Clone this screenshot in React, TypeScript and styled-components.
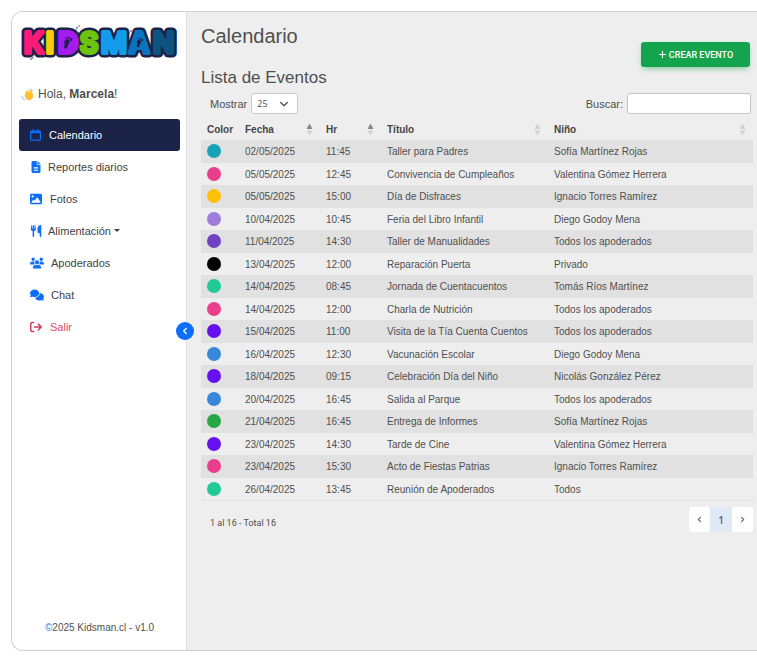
import React, { useState } from "react";
import styled, { createGlobalStyle, css } from "styled-components";
import {
  FaFileLines,
  FaImage,
  FaUtensils,
  FaUsers,
  FaComments,
  FaArrowRightFromBracket,
  FaPlus,
} from "react-icons/fa6";

const GlobalStyle = createGlobalStyle`
  *, *::before, *::after { box-sizing: border-box; }
  body {
    margin: 0;
    background: #fff;
    color: #4f4f4f;
    font-family: "Liberation Sans", Arial, sans-serif;
    font-size: 11px;
    overflow-x: hidden;
  }
  button, input, select { font: inherit; color: inherit; }
`;

const Frame = styled.div`
  display: flex;
  min-height: calc(100vh - 21px);
  margin: 11px 0 10px 11px;
  border: 1px solid #cfcfcf;
  border-right: 0;
  border-radius: 12px 0 0 12px;
  background: #eeeeee;
`;

const Sidebar = styled.aside`
  position: relative;
  display: flex;
  flex-direction: column;
  flex: 0 0 175px;
  padding: 12px 6px 14px 7px;
  border-right: 1px solid #dedede;
  border-radius: 11px 0 0 11px;
  background: #fff;
`;

const Logo = styled.svg`
  display: block;
  width: 160px;
  height: 36px;
`;

const Greeting = styled.p`
  display: flex;
  align-items: center;
  gap: 4px;
  margin: 27px 0 17px 2px;
  line-height: 15px;
  font-size: 12px;
`;

const Nav = styled.nav`
  display: flex;
  flex-direction: column;
`;

const NavLink = styled.a<{ $active?: boolean; $danger?: boolean; $gap: number }>`
  display: flex;
  align-items: center;
  height: 32px;
  padding: 0 11px 1px;
  border-radius: 3px;
  font-size: 11px;
  text-decoration: none;
  color: ${(p) => (p.$danger ? "#dc4c64" : "#3f3f3f")};
  svg {
    flex: none;
    margin-right: ${(p) => p.$gap}px;
    color: ${(p) => (p.$danger ? "#d63a55" : "#0d6efd")};
  }
  ${(p) =>
    p.$active &&
    css`
      color: #fff;
      background: #1b2349;
    `}
`;

const Caret = styled.span`
  margin-left: 3px;
  border: 3px solid transparent;
  border-top-color: currentColor;
  border-bottom: 0;
`;

const Copyright = styled.footer`
  margin-top: auto;
  text-align: center;
  font-size: 10px;
  line-height: 16px;
  a { color: #3b71ff; text-decoration: none; }
`;

const Collapse = styled.button`
  position: absolute;
  top: 310px;
  right: -8px;
  display: grid;
  place-items: center;
  width: 18px;
  height: 18px;
  padding: 0;
  border: 0;
  border-radius: 50%;
  color: #fff;
  background: #0d6efd;
`;

const Main = styled.main`
  flex: 1;
  min-width: 0;
  padding: 12px 4px 12px 14px;
`;

const Heading = styled.h1`
  margin: 0;
  font-size: 20px;
  font-weight: 400;
  line-height: 24px;
`;

const Toolbar = styled.div`
  display: flex;
  justify-content: space-between;
  align-items: flex-start;
  height: 40px;
  padding-right: 3px;
`;

const Subheading = styled.h2`
  align-self: flex-end;
  margin: 0;
  font-size: 17px;
  font-weight: 400;
  line-height: 20px;
`;

const CreateButton = styled.button`
  display: flex;
  align-items: center;
  justify-content: center;
  gap: 2px;
  width: 109px;
  height: 25px;
  margin-top: -6px;
  padding: 0;
  border: 0;
  border-radius: 3px;
  color: #fff;
  background: #14a44d;
  box-shadow: 0 3px 6px -2px rgba(20, 164, 77, 0.6);
  font-family: Roboto, sans-serif;
  font-size: 9px;
  font-weight: 500;
  text-transform: uppercase;
`;

const Filters = styled.div`
  display: flex;
  justify-content: space-between;
  align-items: center;
  height: 31px;
  padding: 0 2px 0 9px;
`;

const Field = styled.label`
  display: flex;
  align-items: center;
  gap: 4px;
`;

const SelectWrap = styled.span`
  display: grid;
  align-items: center;
  > * { grid-area: 1 / 1; }
  svg { justify-self: end; margin-right: 10px; pointer-events: none; }
`;

const Select = styled.select`
  appearance: none;
  width: 47px;
  height: 21px;
  padding: 0 5px;
  border: 1px solid #c9c9c9;
  border-radius: 3px;
  background: #fff;
  font-family: "Open Sans", sans-serif;
  font-size: 9px;
`;

const Search = styled.input`
  width: 124px;
  height: 21px;
  border: 1px solid #c4c4c4;
  border-radius: 3px;
  background: #fff;
`;

const Table = styled.table`
  width: 100%;
  table-layout: fixed;
  border-collapse: separate;
  border-spacing: 0;
  border-bottom: 1px solid #e2e2e2;
  font-size: 10px;
`;

const Col = styled.col<{ $width?: number }>`
  width: ${(p) => (p.$width ? `${p.$width}px` : "auto")};
`;

const Th = styled.th`
  height: 21px;
  padding: 0 7px 0 6px;
  text-align: left;
  white-space: nowrap;
  font-weight: 700;
  color: #454545;
`;

const ThInner = styled.span`
  display: flex;
  align-items: center;
  justify-content: space-between;
`;

const Row = styled.tr`
  height: 22px;
  &:nth-child(odd) { height: 23px; background: #e1e1e1; }
`;

const Td = styled.td`
  padding: 0 6px;
  white-space: nowrap;
`;

const Dot = styled.span<{ $color: string }>`
  display: block;
  width: 14px;
  height: 14px;
  margin-bottom: 1px;
  border-radius: 50%;
  background: ${(p) => p.$color};
`;

const TableFooter = styled.div`
  display: flex;
  justify-content: space-between;
  align-items: flex-start;
  padding-top: 6px;
  padding-left: 9px;
`;

const Info = styled.span`
  margin-top: 10px;
  font-family: Roboto, sans-serif;
  font-size: 9px;
  line-height: 12px;
`;

const Pages = styled.div`
  display: flex;
`;

const Page = styled.button<{ $current?: boolean }>`
  display: grid;
  place-items: center;
  width: ${(p) => (p.$current ? 22 : 21)}px;
  height: 25px;
  padding: 0;
  border: 0;
  border-radius: ${(p) => (p.$current ? 0 : 3)}px;
  font-family: "Open Sans", sans-serif;
  font-size: 10px;
  font-weight: ${(p) => (p.$current ? 600 : 400)};
  color: ${(p) => (p.$current ? "#4a6596" : "#666")};
  background: ${(p) => (p.$current ? "#e1e9f6" : "#fff")};
`;

const letters = [
  { c: "K", x: 5, color: "#ff1a75" },
  { c: "I", x: 27, color: "#f6cf0c" },
  { c: "D", x: 39, color: "#a31cf0" },
  { c: "S", x: 61, color: "#6cc40c" },
  { c: "M", x: 82, color: "#139ceb" },
  { c: "A", x: 110, color: "#0b74be" },
  { c: "N", x: 134, color: "#0d5482" },
];

const Foot = ({ x, y, s }: { x: number; y: number; s: number }) => (
  <g transform={`translate(${x} ${y}) rotate(18) scale(${s})`} fill="#1b2349">
    <ellipse cx="0" cy="0" rx="2.6" ry="2.7" />
    <ellipse cx="0.3" cy="4.2" rx="1.8" ry="2.6" />
    <circle cx="-2.5" cy="-3.6" r="0.8" />
    <circle cx="-0.7" cy="-4.3" r="0.8" />
    <circle cx="1" cy="-4.3" r="0.9" />
    <circle cx="3" cy="-3.5" r="1.3" />
  </g>
);

const KidsmanLogo = () => (
  <Logo viewBox="0 0 160 36" role="img" aria-label="Kidsman">
    <g
      fontFamily="Inter, sans-serif"
      fontWeight="600"
      fontSize="28"
      strokeLinejoin="round"
      aria-hidden="true"
    >
      {letters.map((l) => (
        <text key={l.c} x={l.x} y="29" fill="#1b2349" stroke="#1b2349" strokeWidth="9">{l.c}</text>
      ))}
      {letters.map((l) => (
        <text key={l.c} x={l.x} y="29" fill={l.color} stroke={l.color} strokeWidth="4">{l.c}</text>
      ))}
    </g>
    <ellipse cx="48" cy="19" rx="5" ry="7" fill="#a31cf0" />
    <circle cx="120" cy="20" r="4" fill="#0b74be" />
    <Foot x={48} y={18} s={1} />
    <Foot x={120} y={18} s={0.8} />
    <g fill="#1b2349">
      <circle cx="58" cy="4" r="0.8" /><circle cx="60" cy="2" r="0.7" /><circle cx="57" cy="6" r="0.6" />
      <circle cx="112" cy="7" r="0.8" /><circle cx="110" cy="9" r="0.7" />
      <circle cx="12" cy="35" r="0.8" /><circle cx="14" cy="34" r="0.7" />
      <circle cx="147" cy="32" r="0.8" /><circle cx="146" cy="30" r="0.6" />
    </g>
  </Logo>
);

const WaveIcon = () => (
  <svg width="13" height="13" viewBox="0 0 13 13" aria-hidden="true">
    <g stroke="#ffca3a" strokeWidth="2.4" strokeLinecap="round">
      <path d="M5 5 8 8M6.500 3.500 9 6M4.800 7.200 7 9.500M9.800 3 10.300 7" />
    </g>
    <path d="M5 6 9 4l2.500 1.200c1 2.600.6 5-1.200 6.300-2 1.300-4 .7-6.300-2z" fill="#fdbf2d" />
    <path d="M1 8q0 3 3 3.500M8.500 1q2 0 2.800 1.600" fill="none" stroke="#a9d0f2" strokeWidth="1.100" strokeLinecap="round" />
  </svg>
);

const CalendarIcon = () => (
  <svg width="11" height="12" viewBox="0 0 11 12" fill="none" stroke="currentColor" aria-hidden="true">
    <rect x="0.6" y="2" width="9.800" height="9.200" rx="1" strokeWidth="1.200" />
    <path d="M0.600 3.200h9.800" strokeWidth="2" />
    <path d="M3 0.300v2M8 0.300v2" strokeWidth="1.300" />
  </svg>
);

const Chevron = ({ d, size = 7, width = 1.3 }: { d: string; size?: number; width?: number }) => (
  <svg width={size} height={size} viewBox="0 0 8 8" fill="none" stroke="currentColor"
    strokeWidth={width} strokeLinecap="round" strokeLinejoin="round" aria-hidden="true">
    <path d={d} />
  </svg>
);

const LEFT = "M5.200 1.500 2.700 4 5.200 6.500";
const RIGHT = "M2.800 1.500 5.300 4 2.800 6.500";
const DOWN = "M0.700 2.500 4 5.700 7.300 2.500";

const SortIcon = ({ asc }: { asc?: boolean }) => (
  <svg width="7" height="13" viewBox="0 0 7 13" aria-hidden="true">
    <path d="M3.500 0.500 6.500 6h-6z" fill={asc ? "#888" : "#d2d2d2"} />
    <path d="M3.500 12.500 6.500 7.500h-6z" fill="#d2d2d2" />
  </svg>
);

const nav = [
  { label: "Calendario", icon: <CalendarIcon />, gap: 8, active: true },
  { label: "Reportes diarios", icon: <FaFileLines size={12} />, gap: 6 },
  { label: "Fotos", icon: <FaImage size={12} />, gap: 8 },
  { label: "Alimentación", icon: <FaUtensils size={12} />, gap: 6, menu: true },
  { label: "Apoderados", icon: <FaUsers size={14} />, gap: 7 },
  { label: "Chat", icon: <FaComments size={14} />, gap: 7 },
  { label: "Salir", icon: <FaArrowRightFromBracket size={12} />, gap: 8, danger: true },
];

const events = [
  ["#17a2b8", "02/05/2025", "11:45", "Taller para Padres", "Sofía Martínez Rojas"],
  ["#e83e8c", "05/05/2025", "12:45", "Convivencia de Cumpleaños", "Valentina Gómez Herrera"],
  ["#ffc107", "05/05/2025", "15:00", "Día de Disfraces", "Ignacio Torres Ramírez"],
  ["#9f7bdc", "10/04/2025", "10:45", "Feria del Libro Infantil", "Diego Godoy Mena"],
  ["#6f42c1", "11/04/2025", "14:30", "Taller de Manualidades", "Todos los apoderados"],
  ["#000000", "13/04/2025", "12:00", "Reparación Puerta", "Privado"],
  ["#20c997", "14/04/2025", "08:45", "Jornada de Cuentacuentos", "Tomás Ríos Martínez"],
  ["#e83e8c", "14/04/2025", "12:00", "Charla de Nutrición", "Todos los apoderados"],
  ["#6610f2", "15/04/2025", "11:00", "Visita de la Tía Cuenta Cuentos", "Todos los apoderados"],
  ["#3788d8", "16/04/2025", "12:30", "Vacunación Escolar", "Diego Godoy Mena"],
  ["#6610f2", "18/04/2025", "09:15", "Celebración Día del Niño", "Nicolás González Pérez"],
  ["#3788d8", "20/04/2025", "16:45", "Salida al Parque", "Todos los apoderados"],
  ["#28a745", "21/04/2025", "16:45", "Entrega de Informes", "Sofía Martínez Rojas"],
  ["#6610f2", "23/04/2025", "14:30", "Tarde de Cine", "Valentina Gómez Herrera"],
  ["#e83e8c", "23/04/2025", "15:30", "Acto de Fiestas Patrias", "Ignacio Torres Ramírez"],
  ["#20c997", "26/04/2025", "13:45", "Reunión de Apoderados", "Todos"],
];

const columns = [
  { label: "Color", width: 38 },
  { label: "Fecha", width: 81, sort: true, asc: true },
  { label: "Hr", width: 61, sort: true, asc: true },
  { label: "Título", width: 167, sort: true },
  { label: "Niño", sort: true },
];

export default function App() {
  const [query, setQuery] = useState("");
  const rows = events.filter((e) =>
    e.slice(1).join(" ").toLowerCase().includes(query.toLowerCase())
  );

  return (
    <>
      <GlobalStyle />
      <Frame>
        <Sidebar>
          <KidsmanLogo />
          <Greeting>
            <WaveIcon />
            <span>Hola, <strong>Marcela</strong>!</span>
          </Greeting>
          <Nav>
            {nav.map((n) => (
              <NavLink key={n.label} href="#" $active={n.active} $danger={n.danger} $gap={n.gap}>
                {n.icon}
                <span>{n.label}</span>
                {n.menu && <Caret />}
              </NavLink>
            ))}
          </Nav>
          <Copyright><a href="#">©</a>2025 Kidsman.cl - v1.0</Copyright>
          <Collapse aria-label="Contraer menú"><Chevron d={LEFT} size={8} width={1.4} /></Collapse>
        </Sidebar>
        <Main>
          <Heading>Calendario</Heading>
          <Toolbar>
            <Subheading>Lista de Eventos</Subheading>
            <CreateButton><FaPlus size={9} />Crear evento</CreateButton>
          </Toolbar>
          <Filters>
            <Field>
              Mostrar
              <SelectWrap>
                <Select defaultValue="25">
                  <option>10</option>
                  <option>25</option>
                  <option>50</option>
                </Select>
                <Chevron d={DOWN} size={8} />
              </SelectWrap>
            </Field>
            <Field>
              Buscar:
              <Search type="search" value={query} onChange={(e) => setQuery(e.target.value)} />
            </Field>
          </Filters>
          <Table>
            <colgroup>
              {columns.map((c) => <Col key={c.label} $width={c.width} />)}
            </colgroup>
            <thead>
              <tr>
                {columns.map((c) => (
                  <Th key={c.label}>
                    <ThInner>{c.label}{c.sort && <SortIcon asc={c.asc} />}</ThInner>
                  </Th>
                ))}
              </tr>
            </thead>
            <tbody>
              {rows.map(([color, date, time, title, child]) => (
                <Row key={date + time}>
                  <Td><Dot $color={color} /></Td>
                  <Td>{date}</Td>
                  <Td>{time}</Td>
                  <Td>{title}</Td>
                  <Td>{child}</Td>
                </Row>
              ))}
            </tbody>
          </Table>
          <TableFooter>
            <Info>1 al 16 - Total 16</Info>
            <Pages>
              <Page aria-label="Anterior"><Chevron d={LEFT} /></Page>
              <Page $current>1</Page>
              <Page aria-label="Siguiente"><Chevron d={RIGHT} /></Page>
            </Pages>
          </TableFooter>
        </Main>
      </Frame>
    </>
  );
}
